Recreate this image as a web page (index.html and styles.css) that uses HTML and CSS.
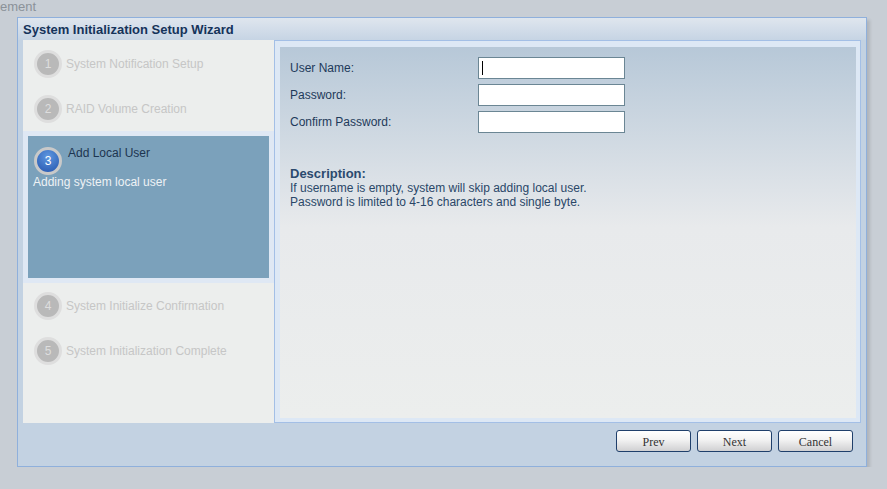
FILE: index.html
```html
<!DOCTYPE html>
<html lang="en">
<head>
    <meta charset="UTF-8">
    <title>System Initialization Setup Wizard</title>
    <link rel="stylesheet" href="styles.css">
</head>
<body>
    <div class="page-title">ement</div>
    <div class="wizard">
        <div class="wizard-title">System Initialization Setup Wizard</div>
        <div class="wizard-body">
            <div class="steps">
                <div class="step">
                    <span class="step-num">1</span>
                    <span class="step-name">System Notification Setup</span>
                </div>
                <div class="step">
                    <span class="step-num">2</span>
                    <span class="step-name">RAID Volume Creation</span>
                </div>
                <div class="step-active-wrap">
                    <div class="step-active">
                        <div class="step-head">
                            <span class="step-num">3</span>
                            <span class="step-name">Add Local User</span>
                        </div>
                        <div class="step-desc">Adding system local user</div>
                    </div>
                </div>
                <div class="step">
                    <span class="step-num">4</span>
                    <span class="step-name">System Initialize Confirmation</span>
                </div>
                <div class="step">
                    <span class="step-num">5</span>
                    <span class="step-name">System Initialization Complete</span>
                </div>
            </div>
            <div class="content-frame">
                <div class="content">
                    <div class="form-row">
                        <label for="username">User Name:</label>
                        <div class="input-wrap">
                            <input type="text" id="username">
                            <span class="caret"></span>
                        </div>
                    </div>
                    <div class="form-row">
                        <label for="password">Password:</label>
                        <input type="password" id="password">
                    </div>
                    <div class="form-row">
                        <label for="confirm">Confirm Password:</label>
                        <input type="password" id="confirm">
                    </div>
                    <div class="description">
                        <div class="desc-title">Description:</div>
                        <div>If username is empty, system will skip adding local user.</div>
                        <div>Password is limited to 4-16 characters and single byte.</div>
                    </div>
                </div>
            </div>
        </div>
        <div class="wizard-footer">
            <button class="btn">Prev</button>
            <button class="btn">Next</button>
            <button class="btn">Cancel</button>
        </div>
    </div>
</body>
</html>
```

FILE: styles.css
```css
body {
    margin: 0;
    background-color: #c8ced5;
    font-family: 'Liberation Sans', Arial, sans-serif;
    font-size: 12px;
    overflow: hidden;
}

.page-title {
    height: 17px;
    line-height: 13px;
    font-size: 13px;
    color: #8b9299;
}

.wizard {
    width: 848px;
    height: 448px;
    margin-left: 17px;
    border: 1px solid #8fb0dc;
    background-color: #c3d2e2;
    box-shadow: 3px 3px 3px rgba(0, 0, 0, 0.12);
    display: flex;
    flex-direction: column;
}

.wizard-title {
    height: 22px;
    line-height: 23px;
    padding-left: 5px;
    font-weight: bold;
    font-size: 13px;
    color: #15335a;
    background: linear-gradient(#dfe6ee, #c6d4e4);
}

.wizard-body {
    display: flex;
    height: 383px;
    padding: 0 5px 0 5px;
}

.steps {
    width: 251px;
    background-color: #eceeed;
    padding-top: 1px;
}

.step {
    display: flex;
    align-items: center;
    height: 45px;
    padding-left: 11px;
}

.step-num {
    width: 22px;
    height: 22px;
    border-radius: 50%;
    border: 3px solid #dedede;
    background-color: #b9b9b9;
    color: #dedede;
    font-size: 12px;
    line-height: 22px;
    text-align: center;
    flex-shrink: 0;
}

.step-name {
    color: #c6c6c6;
    margin-left: 4px;
}

.step-active-wrap {
    background-color: #dfe8f4;
    padding: 5px;
    height: 142px;
}

.step-active {
    background-color: #7ba1bb;
    height: 142px;
    padding: 11px 0 0 5px;
    box-sizing: border-box;
}

.step-head {
    display: flex;
    align-items: flex-start;
    padding-left: 1px;
}

.step-active .step-num {
    border-color: #c9c9c9;
    background: radial-gradient(circle at 50% 30%, #5e97e0, #2454ad);
    color: #ffffff;
}

.step-active .step-name {
    color: #1d3550;
    margin-left: 6px;
    margin-top: -1px;
}

.step-desc {
    color: #eef2f5;
}

.content-frame {
    flex: 1;
    border: 1px solid #a3bfe6;
    background-color: #dde8f5;
    padding: 6px 4px 4px 5px;
    display: flex;
}

.content {
    flex: 1;
    padding: 10px 10px 0 10px;
    background: linear-gradient(#b7c8d8 0px, #e8eaec 180px, #eceeed 370px);
}

.form-row {
    display: flex;
    align-items: center;
    height: 22px;
    margin-bottom: 5px;
}

.form-row label {
    width: 188px;
    color: #1e3a5a;
}

.input-wrap {
    position: relative;
    height: 22px;
}

.form-row input {
    width: 147px;
    height: 22px;
    box-sizing: border-box;
    border: 1px solid #6b8694;
    background-color: #ffffff;
    padding: 0 4px;
    margin: 0;
    outline: none;
    font-family: 'Liberation Sans', Arial, sans-serif;
    font-size: 12px;
}

.caret {
    position: absolute;
    left: 4px;
    top: 4px;
    width: 1px;
    height: 14px;
    background-color: #000000;
}

.description {
    margin-top: 34px;
    color: #2a4768;
    line-height: 14px;
}

.desc-title {
    font-weight: bold;
    font-size: 13px;
    color: #2b4a6e;
}

.wizard-footer {
    flex: 1;
    display: flex;
    justify-content: flex-end;
    align-items: flex-start;
    gap: 6px;
    padding: 7px 13px 0 0;
}

.btn {
    width: 75px;
    height: 22px;
    border: 1px solid #1f3f6b;
    border-radius: 3px;
    background: linear-gradient(#ffffff, #f2f2f2 45%, #d0d0d2);
    font-family: 'Liberation Serif', 'Times New Roman', serif;
    font-size: 12px;
    color: #333333;
    padding: 0;
    padding-top: 2px;
    cursor: pointer;
}
```
